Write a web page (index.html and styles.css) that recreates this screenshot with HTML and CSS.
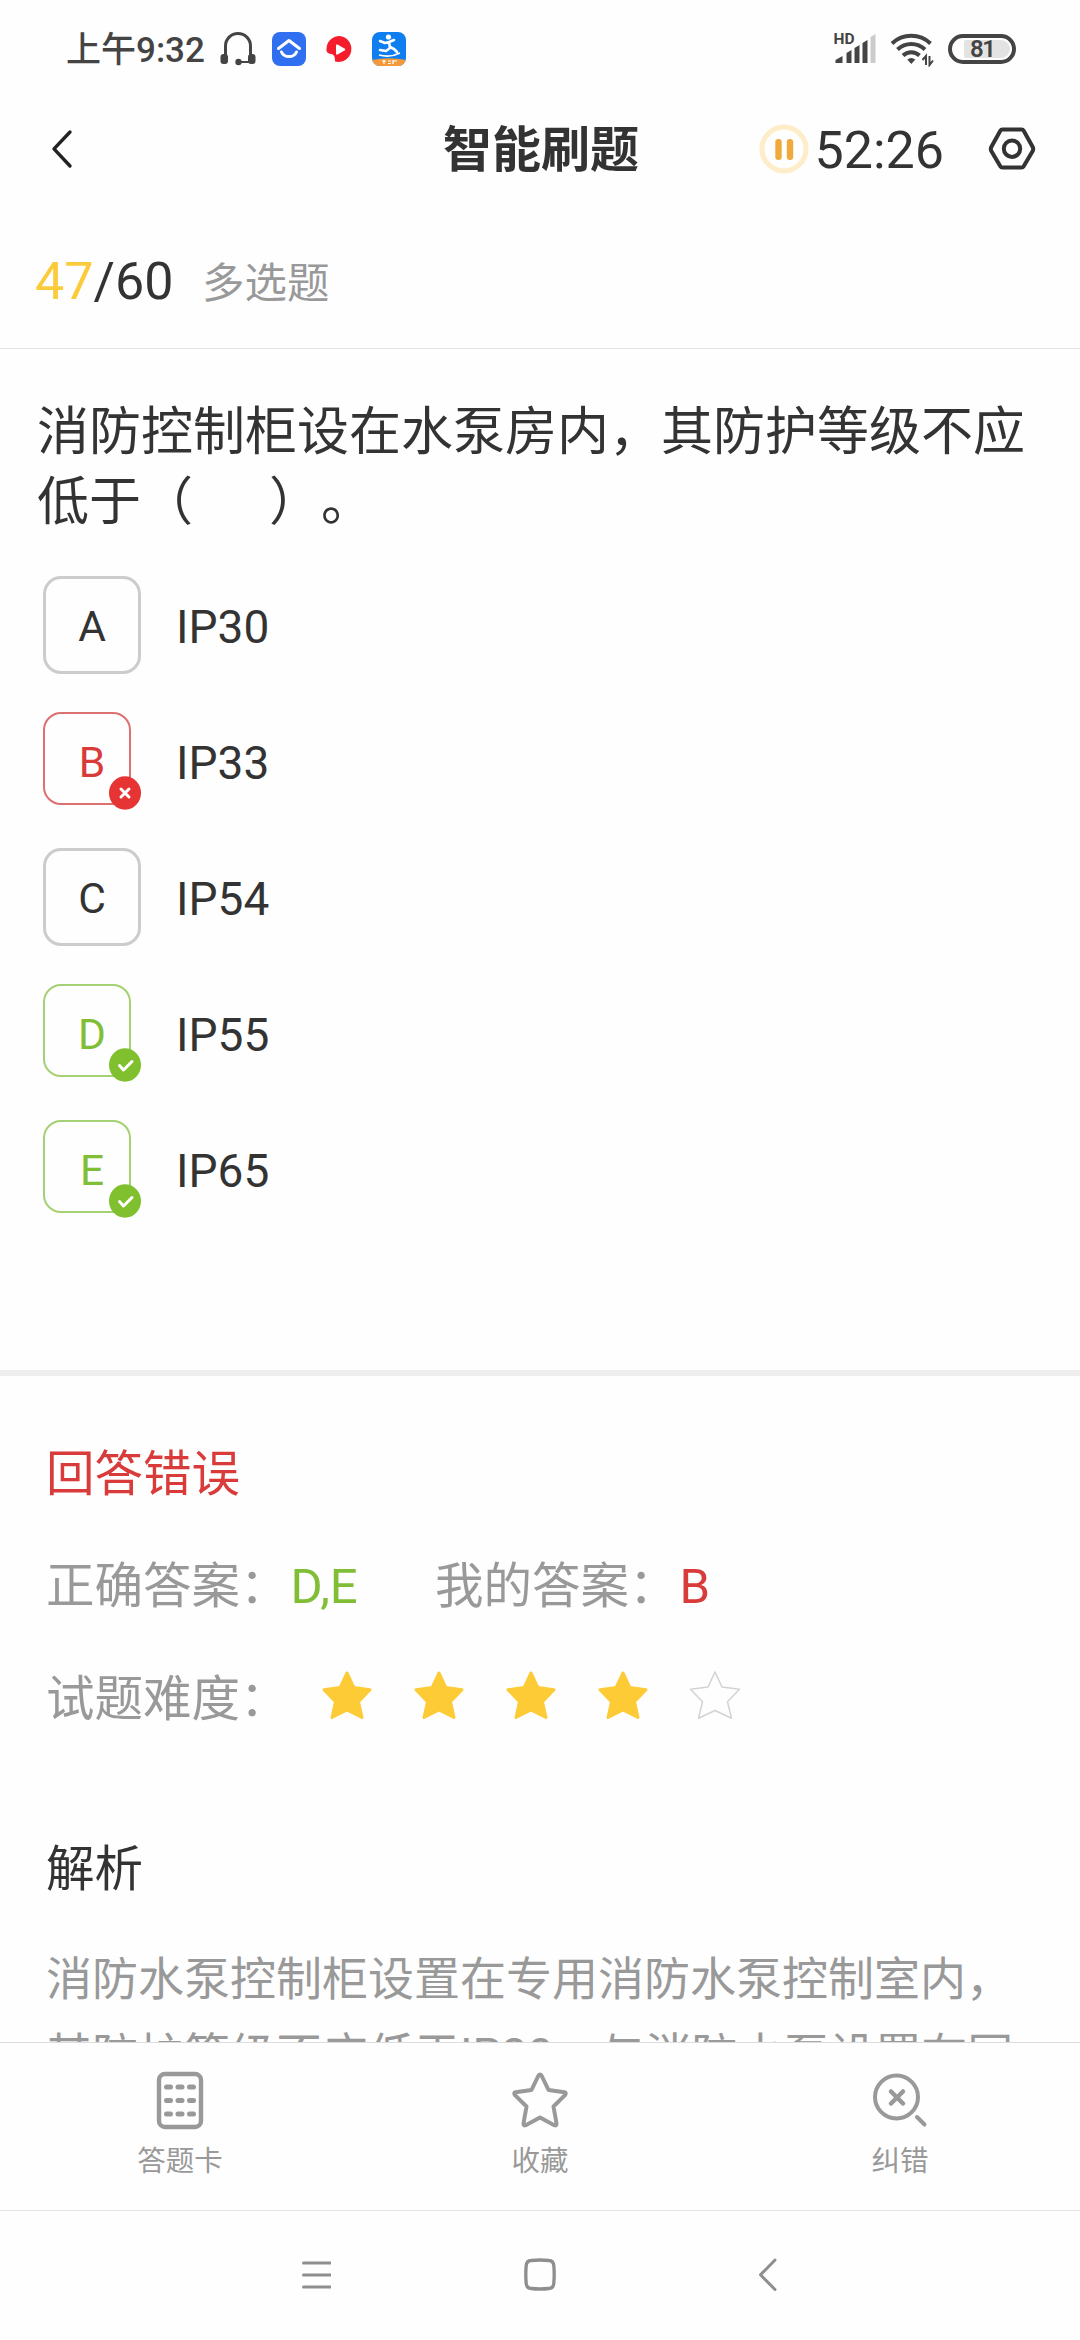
FILE: index.html
```
<!DOCTYPE html>
<html lang="zh-CN">
<head>
  <meta charset="UTF-8" />
  <meta name="viewport" content="width=device-width, initial-scale=1.0"/>
  <title>智能刷题</title>
  <link rel="stylesheet" href="styles.css">
</head>
<body>
  <div class="app">
    <div class="status-bar">
      <span class="clock">上午9:32</span>
      <svg class="status-headset" width="36" height="34" viewBox="0 0 36 34">
        <path d="M5.500 24V14a12.500 12.500 0 0 1 25 0v10" fill="none" stroke="#444" stroke-width="3"/>
        <path d="M20 30H30" stroke="#444" stroke-width="2"/>
        <rect x="0.500" y="22" width="7.500" height="10" rx="3" fill="#444"/>
        <rect x="28" y="22" width="7.500" height="10" rx="3" fill="#444"/>
        <circle cx="18.500" cy="30" r="3.200" fill="#444"/>
      </svg>
      <svg class="status-app" width="34" height="34" viewBox="0 0 34 34">
        <rect width="34" height="34" rx="8" fill="#2f6ff0"/>
        <path d="M6.500 16.500 17 8.500 27.500 16.500" fill="none" stroke="#fff" stroke-width="3" stroke-linecap="round" stroke-linejoin="round"/>
        <path d="M9.500 20a8 7 0 0 0 15 0" fill="none" stroke="#fff" stroke-width="3" stroke-linecap="round"/>
      </svg>
      <svg class="status-app" width="34" height="34" viewBox="0 0 34 34">
        <path d="M17.500 4A13 13 0 1 1 13 29.500C13 26 13 22.500 9 22 6 21.500 4 20 4.500 17A13 13 0 0 1 17.500 4Z" fill="#f51d2c"/>
        <path d="M14 13.500q0-1.500 1.500-1l7 4q1.500 1 0 2l-7 4q-1.500.5-1.500-1z" fill="#fff"/>
      </svg>
      <svg class="status-app" width="34" height="34" viewBox="0 0 34 34">
        <defs><clipPath id="appClip"><rect width="34" height="34" rx="8"/></clipPath></defs>
        <g clip-path="url(#appClip)">
          <rect width="34" height="34" fill="#0f7ef0"/>
          <path d="M0 28q17-3.500 34 0v6H0z" fill="#f59a3a"/>
        </g>
        <circle cx="16.500" cy="5" r="2.600" fill="#fff"/>
        <path d="M8 9l5 2 4-1 5-2M17 10l1 6-4 3-6-1M18 15l4 2 3 3" fill="none" stroke="#fff" stroke-width="2.600" stroke-linecap="round" stroke-linejoin="round"/>
        <path d="M7 23q11 3 21-2" fill="none" stroke="#fff" stroke-width="1.500"/>
        <path d="M10 29h4M12 28v4M16 29h3M16 31.500h3M21 28v4M21 29h4" stroke="#fff" stroke-width="1.200"/>
      </svg>
      <span class="status-space"></span>
      <svg width="42" height="50" viewBox="0 -8 42 50">
        <text x="-0.500" y="12" class="hd-text">HD</text>
        <g fill="#444">
          <path d="M1.500 31v-3l7-4v7z"/>
          <path d="M12.500 31V21l5-3v13z"/>
          <path d="M20.500 31V16l5-3v18z"/>
          <path d="M28.500 31V11l5-3v23z"/>
          <path d="M36.500 31V5l5-3v29z" fill="#ccc"/>
        </g>
      </svg>
      <svg class="status-wifi" width="44" height="36" viewBox="0 0 44 36">
        <g fill="none" stroke="#444" stroke-width="4">
          <path d="M2 12.500a28 28 0 0 1 38.500 0"/>
          <path d="M7.500 18.500a20 20 0 0 1 27.500 0"/>
          <path d="M13 24.500a12 12 0 0 1 16.500 0"/>
        </g>
        <path d="M17.300 28.500q4-3 8 0l-4 4.500z" fill="#444"/>
        <path d="M36 34v-9l-3.500 4M39.500 25v9l3.500-4.500" fill="none" stroke="#444" stroke-width="2"/>
      </svg>
      <div class="battery"><span class="battery-level">81</span></div>
    </div>

    <div class="header">
      <svg class="back" width="24" height="44" viewBox="0 0 24 44">
        <path d="M20 5 4 21.800 20 39" fill="none" stroke="#222" stroke-width="3.400" stroke-linecap="round" stroke-linejoin="round"/>
      </svg>
      <h1>智能刷题</h1>
      <div class="header-right">
        <svg width="50" height="50" viewBox="0 0 50 50">
          <circle cx="25" cy="25" r="22" fill="none" stroke="#fdedc8" stroke-width="5"/>
          <rect x="16.300" y="15" width="6.400" height="21" rx="3" fill="#f0aa3c"/>
          <rect x="27.800" y="15" width="6.400" height="21" rx="3" fill="#f0aa3c"/>
        </svg>
        <span class="timer">52:26</span>
        <svg class="settings" width="48" height="46" viewBox="0 0 48 46">
          <path d="M14.500 3.500h19q1.500 0 2.200 1.200l9 16.300q1 2 0 4l-9 15.300q-.7 1.200-2.200 1.200h-19q-1.500 0-2.200-1.200l-9-15.300q-1-2 0-4l9-16.300q.7-1.200 2.200-1.200z" fill="none" stroke="#333" stroke-width="4"/>
          <circle cx="24" cy="22.700" r="8.200" fill="none" stroke="#333" stroke-width="4"/>
        </svg>
      </div>
    </div>

    <div class="counter">
      <span class="number"><span class="current">47</span>/60</span>
      <span class="type">多选题</span>
    </div>

    <div class="content">
      <p class="question">消防控制柜设在水泵房内，其防护等级不应低于（&nbsp;&nbsp;&nbsp;&nbsp;&nbsp;&nbsp;）。</p>

      <div class="options">
        <div class="option">
          <div class="letter">A</div>
          <span class="option-text">IP30</span>
        </div>
        <div class="option">
          <div class="letter wrong">B
            <svg class="badge" width="32" height="34" viewBox="0 0 32 34">
              <ellipse cx="16" cy="17" rx="16" ry="16.700" fill="#e63333"/>
              <path d="M12 13l8 8M20 13l-8 8" stroke="#fff" stroke-width="3" stroke-linecap="round"/>
            </svg>
          </div>
          <span class="option-text">IP33</span>
        </div>
        <div class="option">
          <div class="letter">C</div>
          <span class="option-text">IP54</span>
        </div>
        <div class="option">
          <div class="letter right">D
            <svg class="badge" width="32" height="34" viewBox="0 0 32 34">
              <ellipse cx="16" cy="17" rx="16" ry="16.700" fill="#80c02f"/>
              <path d="M10.500 17.500l4 4.500 8.500-8.500" fill="none" stroke="#fff" stroke-width="3" stroke-linecap="round" stroke-linejoin="round"/>
            </svg>
          </div>
          <span class="option-text">IP55</span>
        </div>
        <div class="option">
          <div class="letter right">E
            <svg class="badge" width="32" height="34" viewBox="0 0 32 34">
              <ellipse cx="16" cy="17" rx="16" ry="16.700" fill="#80c02f"/>
              <path d="M10.500 17.500l4 4.500 8.500-8.500" fill="none" stroke="#fff" stroke-width="3" stroke-linecap="round" stroke-linejoin="round"/>
            </svg>
          </div>
          <span class="option-text">IP65</span>
        </div>
      </div>

      <div class="result">
        <div class="row red">回答错误</div>
        <div class="row answers">
          <span class="answer">正确答案：<span class="value green">D,E</span></span>
          <span>我的答案：<span class="value red">B</span></span>
        </div>
        <div class="row">
          <span class="difficulty">试题难度：</span>
          <div class="stars">
            <svg class="star" viewBox="0 0 52 50"><path d="M26 3l6.800 14.500 16.200 2.200-11.500 12 3.500 15.800-15-7.500-15 7.500 3.500-15.800L3 19.700l16.200-2.200z"/></svg>
            <svg class="star" viewBox="0 0 52 50"><path d="M26 3l6.800 14.500 16.200 2.200-11.500 12 3.500 15.800-15-7.500-15 7.500 3.500-15.800L3 19.700l16.200-2.200z"/></svg>
            <svg class="star" viewBox="0 0 52 50"><path d="M26 3l6.800 14.500 16.200 2.200-11.500 12 3.500 15.800-15-7.500-15 7.500 3.500-15.800L3 19.700l16.200-2.200z"/></svg>
            <svg class="star" viewBox="0 0 52 50"><path d="M26 3l6.800 14.500 16.200 2.200-11.500 12 3.500 15.800-15-7.500-15 7.500 3.500-15.800L3 19.700l16.200-2.200z"/></svg>
            <svg class="star empty" viewBox="0 0 52 50"><path d="M26 2l7 15 17.500 2.200-12 12.500 4 16.500L26 40.500 9.500 48.200l4-16.500-12-12.500L19 17z"/></svg>
          </div>
        </div>
      </div>

      <h2>解析</h2>
      <p class="analysis">消防水泵控制柜设置在专用消防水泵控制室内，其防护等级不应低于IP30，与消防水泵设置在同</p>
    </div>

    <div class="tabs">
      <div class="tab">
        <svg width="60" height="60" viewBox="0 0 60 60">
          <rect x="9" y="4" width="42" height="53" rx="6" fill="none" stroke="#999" stroke-width="4.400"/>
          <path d="M16.500 17h4M28 17h4M39.500 17h4M16.500 30.500h4M28 30.500h4M39.500 30.500h4M16.500 44h4M28 44h4M39.500 44h4" stroke="#999" stroke-width="5" stroke-linecap="round"/>
        </svg>
        <span>答题卡</span>
      </div>
      <div class="tab">
        <svg width="60" height="60" viewBox="0 0 60 60">
          <path d="M28.500 5.500q1.500-2 3 0l7 14.500 16 2.200q2 .6.800 2.600L43.500 36.500l3 17q0 2.500-2.200 1.700L30 47.500l-14.300 7.700q-2.200.8-2.200-1.700l3-17L4.700 24.800q-1.200-2 .8-2.600l16-2.200z" fill="none" stroke="#999" stroke-width="4" stroke-linejoin="round"/>
        </svg>
        <span>收藏</span>
      </div>
      <div class="tab">
        <svg width="60" height="60" viewBox="0 0 60 60">
          <circle cx="26.500" cy="27" r="21.500" fill="none" stroke="#999" stroke-width="4"/>
          <path d="M21 21.500l12 12M33 21.500l-12 12" stroke="#999" stroke-width="4.500" stroke-linecap="round"/>
          <path d="M47 47l7.500 7.500" stroke="#999" stroke-width="4" stroke-linecap="round"/>
        </svg>
        <span>纠错</span>
      </div>
    </div>

    <div class="nav-bar">
      <svg width="36" height="36" viewBox="0 0 36 36">
        <path d="M8.500 6h27M8.500 18h27M8.500 30h27" stroke="#8e8e8e" stroke-width="3" stroke-linecap="round"/>
      </svg>
      <svg width="36" height="36" viewBox="0 0 36 36">
        <path d="M9 3.500q9-1 18 0 4.300.2 4.800 5 .8 9 0 18-.5 4.800-4.800 5-9 1-18 0-4.300-.2-4.800-5-.8-9 0-18 .5-4.800 4.800-5z" fill="none" stroke="#8e8e8e" stroke-width="3.300"/>
      </svg>
      <svg width="36" height="36" viewBox="0 0 36 36">
        <path d="M26 3 11.500 17.800 26 32.500" fill="none" stroke="#8e8e8e" stroke-width="3" stroke-linecap="round" stroke-linejoin="round"/>
      </svg>
    </div>
  </div>
</body>
</html>
```

FILE: styles.css
```
* {
  box-sizing: border-box;
}

body {
  margin: 0;
  background: #fefefe;
  color: #333;
  font-family: "Noto Sans CJK SC", sans-serif;
}

h1, h2, p {
  margin: 0;
  font-weight: normal;
}

svg {
  display: block;
  flex-shrink: 0;
}

.app {
  width: 1080px;
  height: 2340px;
  display: flex;
  flex-direction: column;
  overflow: hidden;
}

/* status bar */
.status-bar {
  height: 98px;
  padding: 0 64px 0 66px;
  display: flex;
  align-items: center;
  color: #444;
}

.clock {
  width: 154px;
  padding-top: 3px;
  font-family: Roboto, "Noto Sans CJK SC", sans-serif;
  font-size: 35px;
  font-weight: 500;
  line-height: 40px;
  white-space: nowrap;
}

.status-app {
  margin-left: 16px;
}

.status-space {
  flex: 1;
}

.hd-text {
  font-family: Roboto, sans-serif;
  font-size: 15.500px;
  font-weight: 700;
  fill: #444;
}

.status-wifi {
  margin: 0 14px 0 14px;
}

.battery {
  width: 68px;
  height: 30px;
  padding: 4px 2px 4px 12px;
  border: 4px solid #444;
  border-radius: 15px;
  display: flex;
  align-items: center;
}

.battery-level {
  width: 46px;
  height: 18px;
  padding-left: 6px;
  border-radius: 2px 9px 9px 2px;
  background: #e3e3e3;
  font-family: Roboto, sans-serif;
  font-size: 24px;
  font-weight: 600;
  letter-spacing: -1.500px;
  line-height: 19px;
}

/* header */
.header {
  height: 101px;
  padding: 0 44px 0 50px;
  display: grid;
  grid-template-columns: 1fr 200px 1fr;
  align-items: center;
}

h1 {
  padding-bottom: 5px;
  font-size: 49px;
  font-weight: 700;
  line-height: 90px;
  white-space: nowrap;
}

.header-right {
  display: flex;
  align-items: center;
  justify-content: flex-end;
}

.timer {
  margin-left: 6px;
  padding-top: 5px;
  font-family: Roboto, sans-serif;
  font-size: 52px;
  line-height: 60px;
}

.settings {
  margin-left: 44px;
}

/* counter */
.counter {
  height: 150px;
  padding: 16px 35px 0;
  display: flex;
  border-bottom: 1px solid #e3e3e3;
  line-height: 130px;
}

.number {
  width: 167px;
  padding-top: 2px;
  font-family: Roboto, sans-serif;
  font-size: 52px;
}

.current {
  color: #fbcb3c;
}

.type {
  font-size: 42.500px;
  color: #999;
}

.content {
  flex: 1;
  min-height: 0;
  overflow: hidden;
}

.question {
  padding: 44px 37px 43px;
  font-size: 52px;
  line-height: 70px;
  word-spacing: 1px;
  text-spacing-trim: space-all;
}

.options {
  display: flex;
  flex-direction: column;
  gap: 38px;
  padding: 0 43px 152px;
  border-bottom: 6px solid #eee;
}

.option {
  height: 98px;
  display: flex;
  align-items: center;
  gap: 35px;
  font-family: Roboto, sans-serif;
  font-size: 46px;
}

.option-text {
  padding-top: 4px;
  line-height: 60px;
}

.letter {
  position: relative;
  width: 98px;
  height: 98px;
  border: 3px solid #ccc;
  border-radius: 18px;
  font-size: 42.500px;
  line-height: 96px;
  text-align: center;
}

/* answered boxes are smaller, the letter stays where it was */
.letter.wrong,
.letter.right {
  width: 88px;
  height: 93px;
  margin: 0 10px 5px 0;
  padding-left: 10px;
  border-width: 2px;
  line-height: 98px;
}

.letter.wrong {
  color: #d93a3a;
  border-color: #dd7070;
}

.letter.right {
  color: #80be36;
  border-color: #a5d074;
}

.badge {
  position: absolute;
  right: -12px;
  bottom: -7px;
}

/* result */
.result {
  padding: 38px 46px 0;
  font-size: 48.500px;
  color: #999;
}

.row {
  height: 112.500px;
  display: flex;
  align-items: center;
  line-height: 70px;
}

.answers {
  padding-top: 4px;
}

.value {
  margin-left: 2px;
  font-family: Roboto, sans-serif;
  font-size: 49px;
}

.red {
  color: #d93a3a;
}

.green {
  color: #80be36;
}

.answer {
  width: 389px;
}

.difficulty {
  width: 275px;
}

.stars {
  display: flex;
  gap: 40px;
}

.star {
  width: 52px;
  height: 50px;
  fill: #fdcb36;
  stroke: #fdcb36;
  stroke-width: 3;
  stroke-linejoin: round;
}

.star.empty {
  fill: none;
  stroke: #d3d3d3;
  stroke-width: 1.500;
}

h2 {
  padding: 78px 46px 41px;
  font-size: 48.500px;
  line-height: 70px;
}

.analysis {
  padding: 0 46px;
  font-family: Roboto, "Noto Sans CJK SC", sans-serif;
  font-size: 46px;
  line-height: 76px;
  color: #999;
}

/* bottom tabs */
.tabs {
  height: 168px;
  padding-top: 27px;
  display: flex;
  border-top: 1px solid #ddd;
  background: #fefefe;
}

.tab {
  flex: 1;
  display: flex;
  flex-direction: column;
  align-items: center;
  gap: 9px;
  font-size: 28.500px;
  line-height: 40px;
  color: #999;
}

.nav-bar {
  height: 130px;
  padding: 0 295px 2px;
  display: flex;
  align-items: center;
  justify-content: space-between;
  border-top: 1px solid #e3e3e3;
  background: #fefefe;
}
```
